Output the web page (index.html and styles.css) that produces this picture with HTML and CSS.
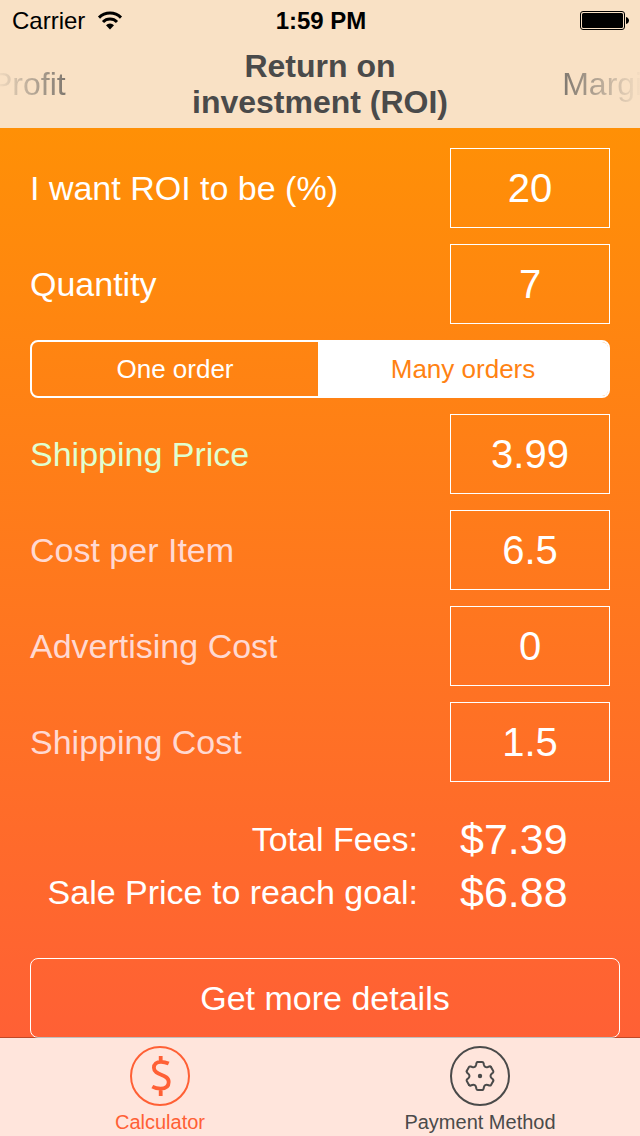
FILE: index.html
```
<!DOCTYPE html>
<html lang="en">
<head>
<meta charset="utf-8">
<meta name="viewport" content="width=device-width, initial-scale=1">
<title>Return on investment (ROI)</title>
<link rel="stylesheet" href="styles.css">
</head>
<body>
<header class="header">
  <div class="status">
    <div class="carrier">
      <span>Carrier</span>
      <svg class="wifi" width="26" height="20" viewBox="0 0 26 20" aria-hidden="true">
        <path d="M2 6.6a15.6 15.6 0 0 1 22 0" fill="none" stroke="#000" stroke-width="3"/>
        <path d="M6 11a9.8 9.8 0 0 1 14 0" fill="none" stroke="#000" stroke-width="3"/>
        <path d="M9 14.2a5.8 5.8 0 0 1 8 0l-4 4.3z"/>
      </svg>
    </div>
    <time class="clock">1:59 PM</time>
    <svg class="battery" width="50" height="20" viewBox="0 0 50 20" aria-hidden="true">
      <rect x=".5" y=".5" width="44" height="18" rx="2.5" fill="none" stroke="#000"/>
      <rect x="2" y="2" width="41" height="15" rx="1.5"/>
      <path d="M46 6c4 1 4 6 0 7z"/>
    </svg>
  </div>
  <nav class="goals" aria-label="Goal">
    <button type="button" class="goal goal-prev">Profit</button>
    <h1 class="goal-current">Return on<br>investment (ROI)</h1>
    <button type="button" class="goal goal-next">Margin</button>
  </nav>
</header>

<main class="content">
  <form class="form">
    <div class="field">
      <label for="roi">I want ROI to be (%)</label>
      <input id="roi" type="text" inputmode="decimal" value="20">
    </div>
    <div class="field">
      <label for="quantity">Quantity</label>
      <input id="quantity" type="text" inputmode="numeric" value="7">
    </div>
    <div class="segments" role="group" aria-label="Orders">
      <button type="button" class="segment" aria-pressed="false">One order</button>
      <button type="button" class="segment segment-on" aria-pressed="true">Many orders</button>
    </div>
    <div class="field income">
      <label for="shipping-price">Shipping Price</label>
      <input id="shipping-price" type="text" inputmode="decimal" value="3.99">
    </div>
    <div class="field cost">
      <label for="item-cost">Cost per Item</label>
      <input id="item-cost" type="text" inputmode="decimal" value="6.5">
    </div>
    <div class="field cost">
      <label for="ad-cost">Advertising Cost</label>
      <input id="ad-cost" type="text" inputmode="decimal" value="0">
    </div>
    <div class="field cost">
      <label for="shipping-cost">Shipping Cost</label>
      <input id="shipping-cost" type="text" inputmode="decimal" value="1.5">
    </div>
  </form>
  <dl class="totals">
    <dt>Total Fees:</dt><dd>$7.39</dd>
    <dt>Sale Price to reach goal:</dt><dd>$6.88</dd>
  </dl>
  <button type="button" class="details">Get more details</button>
</main>

<nav class="tabs" aria-label="Sections">
  <a class="tab tab-on" href="#calculator" aria-current="page">
    <svg width="60" height="60" viewBox="0 0 60 60" fill="none" stroke="currentColor" aria-hidden="true">
      <circle cx="30" cy="30" r="29" stroke-width="2"/>
      <path stroke-width="3.8" d="M38.7 17.6Q34.8 15.8 31 15.8C26.5 15.8 23.9 18.2 23.9 21.7C23.9 30 38.7 27.5 38.7 36C38.7 40.5 35.3 42.6 30.5 42.6Q26 42.6 22.3 40.6M30.7 10v6M30.7 43v7"/>
    </svg>
    <span>Calculator</span>
  </a>
  <a class="tab" href="#payment">
    <svg width="60" height="60" viewBox="-30 -30 60 60" fill="none" stroke="currentColor" stroke-width="2" stroke-linecap="round" aria-hidden="true">
      <defs>
        <path id="tooth" d="M-2.2-14H2.2Q3.3-14 3.6-12.8L3.9-11.2Q4.7-8.1 7.8-9L9.3-9.5Q10.5-9.9 11-8.9"/>
      </defs>
      <circle r="29"/>
      <use href="#tooth"/>
      <use href="#tooth" transform="rotate(60)"/>
      <use href="#tooth" transform="rotate(120)"/>
      <use href="#tooth" transform="rotate(180)"/>
      <use href="#tooth" transform="rotate(240)"/>
      <use href="#tooth" transform="rotate(300)"/>
      <circle r="2.2" fill="currentColor" stroke="none"/>
    </svg>
    <span>Payment Method</span>
  </a>
</nav>
</body>
</html>
```

FILE: styles.css
```
* {
  box-sizing: border-box;
}

body {
  margin: 0;
  min-height: 100vh;
  display: flex;
  flex-direction: column;
  font-family: "Liberation Sans", Arial, sans-serif;
  color: #fff;
  background: #ff6035;
}

button,
input {
  font: inherit;
  color: inherit;
  background: none;
  border: 0;
  border-radius: 0;
  margin: 0;
  padding: 0;
}

.header {
  height: 128px;
  background: #f9e1c5;
  color: #4a4a4a;
  overflow: hidden;
}

.status {
  display: grid;
  grid-template-columns: 1fr auto 1fr;
  align-items: center;
  height: 42px;
  padding: 0 10px 0 12px;
  font-size: 24px;
  color: #000;
}

.carrier {
  display: flex;
  align-items: center;
  gap: 12px;
}

.clock {
  font-weight: bold;
}

.battery {
  justify-self: end;
}

.goals {
  display: grid;
  grid-template-columns: 1fr auto 1fr;
  align-items: center;
  height: 84px;
  font-size: 32px;
  line-height: 36px;
}

.goal-current {
  margin: 0;
  font-size: 32px;
  text-align: center;
}

.goal {
  color: transparent;
  background-clip: text;
  -webkit-background-clip: text;
}

.goal-prev {
  justify-self: start;
  margin-left: -9px;
  background-image: linear-gradient(to right, rgba(74, 74, 74, 0) 5%, rgba(74, 74, 74, 0.7));
}

.goal-next {
  justify-self: end;
  margin-right: -20px;
  background-image: linear-gradient(to left, rgba(74, 74, 74, 0) 18%, rgba(74, 74, 74, 0.7));
}

.content {
  flex: 1;
  display: flex;
  flex-direction: column;
  padding: 20px 30px 0;
  background: linear-gradient(#ff9006, #ff6035);
}

.form {
  display: flex;
  flex-direction: column;
  gap: 16px;
}

.field {
  display: flex;
  align-items: center;
  justify-content: space-between;
  font-size: 34px;
}

.income label {
  color: #e0ffd0;
}

.cost label {
  color: #ffd9d2;
}

.field input {
  width: 160px;
  height: 80px;
  border: 1px solid #fff;
  color: #fff;
  font-size: 40px;
  text-align: center;
}

.segments {
  display: flex;
  height: 58px;
  border: 2px solid #fff;
  border-radius: 8px;
  font-size: 26px;
  overflow: hidden;
}

.segment {
  flex: 1;
  border-right: 2px solid #fff;
}

.segment-on {
  background: #fff;
  color: #ff8212;
}

.totals {
  display: grid;
  grid-template-columns: 1fr 150px;
  column-gap: 42px;
  margin: 31px 0 39px;
  font-size: 34px;
  line-height: 53px;
  text-align: right;
}

.totals dd {
  margin: 0;
  font-size: 43px;
  text-align: left;
}

.details {
  height: 80px;
  margin-right: -10px;
  border: 1px solid #fff;
  border-radius: 8px;
  font-size: 34px;
}

.tabs {
  display: grid;
  grid-template-columns: 1fr 1fr;
  margin-top: -1px;
  border-top: 1px solid rgba(0, 0, 0, 0.25);
  background: #ffe5dc padding-box;
  position: relative;
}

.tab {
  display: flex;
  flex-direction: column;
  align-items: center;
  gap: 4px;
  padding: 8px 0 2px;
  font-size: 20px;
  line-height: 24px;
  color: #4a4a4a;
  text-decoration: none;
}

.tab-on {
  color: #ff6035;
}
```
